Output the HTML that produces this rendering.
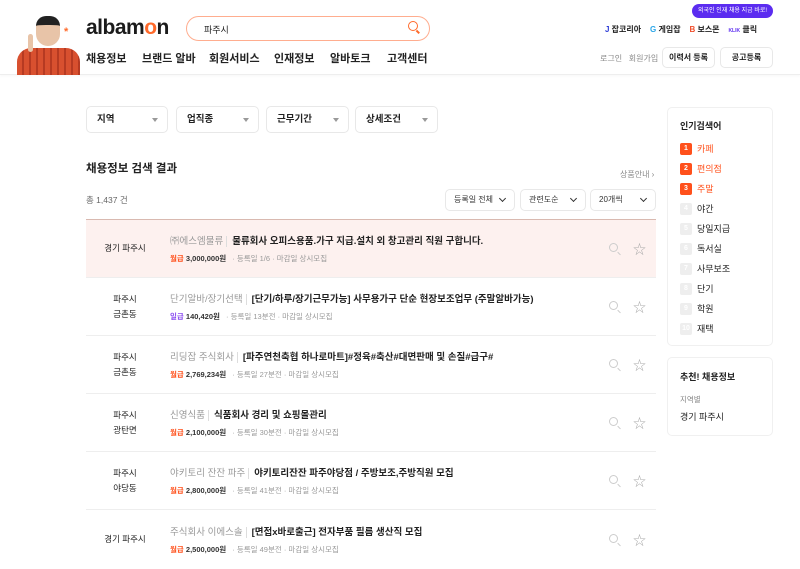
<!DOCTYPE html>
<html><head><meta charset="utf-8"><style>
*{box-sizing:border-box;margin:0;padding:0}
body{width:800px;height:554px;overflow:hidden;background:#fff;font-family:"Liberation Sans","Noto Sans CJK KR",sans-serif;color:#222;position:relative}
.a{position:absolute}
.hdr{left:0;top:0;width:800px;height:75px;border-bottom:1px solid #eee;box-shadow:0 1px 3px rgba(0,0,0,.04)}
.nav span{position:absolute;top:50px;font-size:11px;font-weight:bold}
.box{border:1px solid #e8e8e8;border-radius:5px;background:#fff}
.flt{top:106px;height:27px;font-size:9.5px;font-weight:bold;padding:0 10px;line-height:25px}
.flt i{position:absolute;right:9px;top:11px;width:0;height:0;border-left:3.5px solid transparent;border-right:3.5px solid transparent;border-top:4px solid #999}
.sel{top:189px;height:22px;font-size:8px;padding:0 8px;line-height:20px;color:#333}
.sel i{position:absolute;right:9px;top:6px;width:5px;height:5px;border-right:1.2px solid #333;border-bottom:1.2px solid #333;transform:rotate(45deg)}
.row{left:86px;width:570px;height:58px;border-bottom:1px solid #eee}
.loc{position:absolute;left:0;width:78px;text-align:center;font-size:8.5px;line-height:15px;color:#222}
.co{position:absolute;left:84px;top:13px;font-size:9.5px;color:#999;white-space:nowrap}
.co b{color:#222;font-weight:bold;font-size:9.5px;margin-left:3px;padding-left:5px;border-left:1px solid #ddd}
.mt{position:absolute;left:84px;top:33px;font-size:7.5px;color:#999;white-space:nowrap}
.mt em{font-style:normal;color:#ff501b;font-weight:bold}
.mt em.p{color:#8a4cf0}
.mt strong{color:#333;margin-right:4px}
.ic{position:absolute;right:10px;top:19px;font-size:13px;color:#aaa}
.ic2{position:absolute;right:38px;top:23px;width:9px;height:9px;border:1.2px solid #ccc;border-radius:50%}
.ic2:after{content:"";position:absolute;right:-4px;bottom:-3px;width:4px;height:1.2px;background:#ccc;transform:rotate(45deg)}
.kw{position:absolute;left:680px;font-size:9px;line-height:12px}
.kw span{display:inline-block;width:12px;height:12px;border-radius:2px;background:#eee;color:#fff;font-size:7px;text-align:center;font-weight:bold;margin-right:5px;vertical-align:top}
.kw.h{color:#ff501b}.kw.h span{background:#ff501b}
</style></head><body>
<div class="a hdr"></div>
<!-- character -->
<div class="a" style="left:17px;top:48px;width:63px;height:27px;background:repeating-linear-gradient(90deg,#d8502f 0 5px,#b63a22 5px 7px);border-radius:14px 14px 0 0"></div>
<div class="a" style="left:36px;top:16px;width:24px;height:30px;background:#e8c4a8;border-radius:10px 10px 12px 12px;border-top:9px solid #222"></div>
<div class="a" style="left:28px;top:34px;width:5px;height:18px;background:#e8c4a8;border-radius:3px"></div>
<div class="a" style="left:64px;top:26px;font-size:11px;color:#ff6a2b;font-weight:bold">*</div>
<div class="a" style="top:16px;font-size:21px;font-weight:bold;color:#1b1b1b;left:86px;letter-spacing:-0.5px">albam<span style="color:#ff6a2b">o</span>n</div>
<div class="a" style="left:186px;top:16px;width:244px;height:25px;border:1.5px solid #ffad8f;border-radius:13px"></div>
<div class="a" style="left:204px;top:23px;font-size:9px">파주시</div>
<div class="a" style="left:408px;top:21px;width:10px;height:10px;border:1.5px solid #ff6a2b;border-radius:50%"></div>
<div class="a" style="left:416px;top:31px;width:4px;height:1.5px;background:#ff6a2b;transform:rotate(45deg)"></div>
<div class="nav"><span style="left:86px">채용정보</span><span style="left:142px">브랜드 알바</span><span style="left:209px">회원서비스</span><span style="left:274px">인재정보</span><span style="left:330px">알바토크</span><span style="left:387px">고객센터</span></div>
<div class="a" style="left:692px;top:4px;width:81px;height:14px;background:#5b2cf0;border-radius:7px;color:#fff;font-size:6px;text-align:center;line-height:14px;white-space:nowrap">외국인 인재 채용 지금 바로!</div>
<div class="a" style="left:605px;top:24px;font-size:8px;font-weight:bold;white-space:nowrap"><span style="color:#2c3bd6">J</span> 잡코리아 &nbsp;&nbsp; <span style="color:#2aa6e8">G</span> 게임잡 &nbsp;&nbsp; <span style="color:#f04d2a">B</span> 보스몬 &nbsp;&nbsp; <span style="color:#5b2cf0;font-size:5px">KLIK</span> 클릭</div>
<div class="a" style="left:600px;top:53px;font-size:8px;color:#888">로그인 &nbsp; 회원가입</div>
<div class="a box" style="left:662px;top:47px;width:53px;height:21px;font-size:8px;font-weight:bold;text-align:center;line-height:19px">이력서 등록</div>
<div class="a box" style="left:720px;top:47px;width:53px;height:21px;font-size:8px;font-weight:bold;text-align:center;line-height:19px">공고등록</div>

<div class="a box flt" style="left:86px;width:82px">지역<i></i></div>
<div class="a box flt" style="left:176px;width:83px">업직종<i></i></div>
<div class="a box flt" style="left:266px;width:83px">근무기간<i></i></div>
<div class="a box flt" style="left:355px;width:83px">상세조건<i></i></div>

<div class="a" style="left:86px;top:160px;font-size:11.5px;font-weight:bold">채용정보 검색 결과</div>
<div class="a" style="left:620px;top:169px;font-size:8px;color:#888">상품안내 ›</div>
<div class="a" style="left:86px;top:194px;font-size:8.5px;color:#666">총 1,437 건</div>
<div class="a box sel" style="left:445px;width:70px">등록일 전체<i></i></div>
<div class="a box sel" style="left:520px;width:66px">관련도순<i></i></div>
<div class="a box sel" style="left:590px;width:66px">20개씩<i></i></div>
<div class="a" style="left:86px;top:219px;width:570px;height:1px;background:#d9b9b0"></div>

<div class="a row" style="top:220px;background:#fdf1ef"><div class="loc" style="top:21px">경기 파주시</div><div class="co">㈜에스엠물류<b>물류회사 오피스용품.가구 지급.설치 외 창고관리 직원 구합니다.</b></div><div class="mt"><em>월급</em> <strong>3,000,000원</strong> · 등록일 1/6 · 마감일 상시모집</div><div class="ic2"></div><div class="ic">☆</div></div>
<div class="a row" style="top:278px"><div class="loc" style="top:14px">파주시<br>금촌동</div><div class="co">단기알바/장기선택<b>[단기/하루/장기근무가능] 사무용가구 단순 현장보조업무 (주말알바가능)</b></div><div class="mt"><em class="p">일급</em> <strong>140,420원</strong> · 등록일 13분전 · 마감일 상시모집</div><div class="ic2"></div><div class="ic">☆</div></div>
<div class="a row" style="top:336px"><div class="loc" style="top:14px">파주시<br>금촌동</div><div class="co">리딩잡 주식회사<b>[파주연천축협 하나로마트]#정육#축산#대면판매 및 손질#급구#</b></div><div class="mt"><em>월급</em> <strong>2,769,234원</strong> · 등록일 27분전 · 마감일 상시모집</div><div class="ic2"></div><div class="ic">☆</div></div>
<div class="a row" style="top:394px"><div class="loc" style="top:14px">파주시<br>광탄면</div><div class="co">신영식품<b>식품회사 경리 및 쇼핑몰관리</b></div><div class="mt"><em>월급</em> <strong>2,100,000원</strong> · 등록일 30분전 · 마감일 상시모집</div><div class="ic2"></div><div class="ic">☆</div></div>
<div class="a row" style="top:452px"><div class="loc" style="top:14px">파주시<br>야당동</div><div class="co">야키토리 잔잔 파주<b>야키토리잔잔 파주야당점 / 주방보조,주방직원 모집</b></div><div class="mt"><em>월급</em> <strong>2,800,000원</strong> · 등록일 41분전 · 마감일 상시모집</div><div class="ic2"></div><div class="ic">☆</div></div>
<div class="a row" style="top:511px;border:none"><div class="loc" style="top:21px">경기 파주시</div><div class="co">주식회사 이에스솔<b>[면접x바로출근] 전자부품 필름 생산직 모집</b></div><div class="mt"><em>월급</em> <strong>2,500,000원</strong> · 등록일 49분전 · 마감일 상시모집</div><div class="ic2"></div><div class="ic">☆</div></div>

<div class="a box" style="left:667px;top:107px;width:106px;height:239px;border-color:#f0f0f0"></div>
<div class="a" style="left:680px;top:119px;font-size:9px;font-weight:bold">인기검색어</div>
<div class="kw h" style="top:143px"><span>1</span>카페</div>
<div class="kw h" style="top:163px"><span>2</span>편의점</div>
<div class="kw h" style="top:183px"><span>3</span>주말</div>
<div class="kw" style="top:203px"><span>4</span>야간</div>
<div class="kw" style="top:223px"><span>5</span>당일지급</div>
<div class="kw" style="top:243px"><span>6</span>독서실</div>
<div class="kw" style="top:263px"><span>7</span>사무보조</div>
<div class="kw" style="top:283px"><span>8</span>단기</div>
<div class="kw" style="top:303px"><span>9</span>학원</div>
<div class="kw" style="top:323px"><span>10</span>재택</div>
<div class="a box" style="left:667px;top:357px;width:106px;height:79px;border-color:#f0f0f0"></div>
<div class="a" style="left:680px;top:370px;font-size:9px;font-weight:bold">추천! 채용정보</div>
<div class="a" style="left:680px;top:394px;font-size:7.5px;color:#888">지역별</div>
<div class="a" style="left:680px;top:410px;font-size:9px">경기 파주시</div>
</body></html>
